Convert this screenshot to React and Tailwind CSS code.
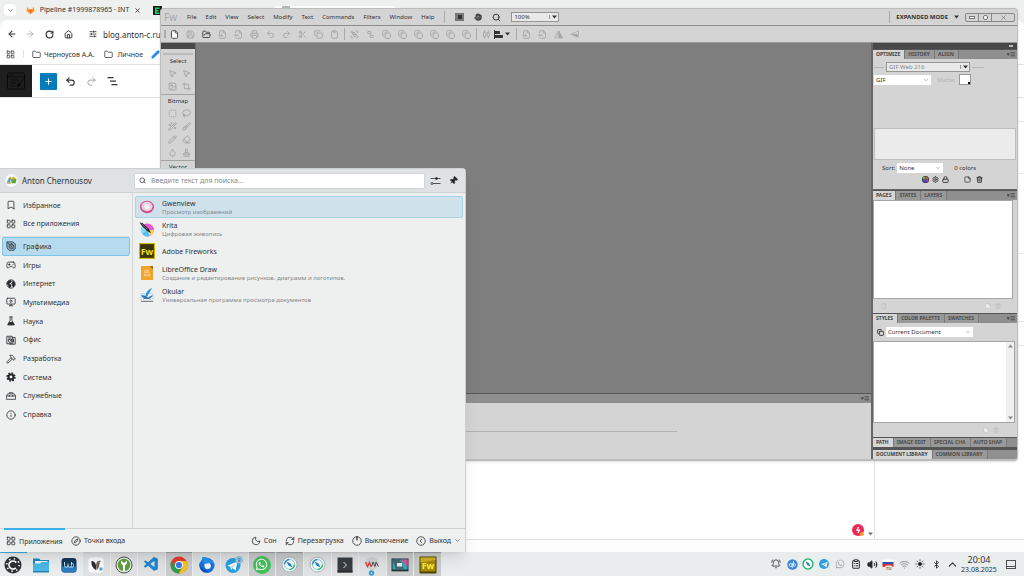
import React, { useState } from 'react';
import {
    AlignHorizontalDistributeCenter, ArrowLeft, ArrowRight, BellRing, Bluetooth, Bookmark, Brush,
    ChevronDown, ChevronUp, Clipboard, ClipboardList, Compass, Copy, Crop, Droplet, Eraser, File,
    FileInput, FileOutput, Folder, FolderOpen, Gamepad2, Group, Hammer, House, Info, Lasso,
    LayoutGrid, Lock, MonitorPlay, Moon, MousePointer2, Pencil, Pin, Printer, Redo2, RefreshCw, RotateCw,
    Save, Scissors, Search, Settings, SlidersHorizontal, SquareDashed, Stamp, Sun, Trash2, Triangle, Undo2, Ungroup,
    Volume2, WandSparkles, Wifi, X, Image as ImageIcon, Hand, Plus, StickyNote,
} from 'lucide-react';
import { FaWhatsapp, FaTelegramPlane } from 'react-icons/fa';
import { VscVscode } from 'react-icons/vsc';

const categories = [
    { label: 'Графика', icon: GraphicsIcon },
    { label: 'Игры', icon: Gamepad2 },
    { label: 'Интернет', icon: GlobeIcon },
    { label: 'Мультимедиа', icon: MonitorPlay },
    { label: 'Наука', icon: FlaskIcon },
    { label: 'Офис', icon: OfficeIcon },
    { label: 'Разработка', icon: Hammer },
    { label: 'Система', icon: GearIcon },
    { label: 'Служебные', icon: ToolboxIcon },
    { label: 'Справка', icon: Info },
];

const apps = [
    { name: 'Gwenview', note: 'Просмотр изображений', icon: GwenviewIcon },
    { name: 'Krita', note: 'Цифровая живопись', icon: KritaIcon },
    { name: 'Adobe Fireworks', icon: FireworksIcon },
    { name: 'LibreOffice Draw', note: 'Создание и редактирование рисунков, диаграмм и логотипов.', icon: DrawIcon },
    { name: 'Okular', note: 'Универсальная программа просмотра документов', icon: OkularIcon },
];

/* ---------- drawings ---------- */

function GraphicsIcon({ size = 10 }) {
    return (
        <svg width={size} height={size} viewBox="0 0 24 24" fill="#8ba1ae" stroke="#31505f" strokeWidth="2">
            <path d="M2 2h9a11 11 0 1 1-9 10z" />
            <circle cx="13" cy="13" r="5" fill="none" />
            <path d="M3 3l16 17M12 5l8 9" />
        </svg>
    );
}

function GlobeIcon({ size = 10 }) {
    return (
        <svg width={size} height={size} viewBox="0 0 24 24" fill="none" stroke="#232629" strokeWidth="1.8">
            <circle cx="12" cy="12" r="10" />
            <path fill="#232629" d="M3 8l6-5 4 2-2 4-4 1 1 3 4 1v4l-4 3-2-6-3-3zM15 4l5 4 1 6-4 5-2-5-1-4 3-3z" />
        </svg>
    );
}

function FlaskIcon({ size = 10 }) {
    return (
        <svg width={size} height={size} viewBox="0 0 24 24" fill="none" stroke="#232629" strokeWidth="1.8">
            <path d="M8 2h8M10 2v8L4 21h16l-6-11V2" />
            <path d="M8 15h8l3 6H5z" fill="#232629" />
        </svg>
    );
}

function OfficeIcon({ size = 10 }) {
    return (
        <svg width={size} height={size} viewBox="0 0 24 24" fill="none" stroke="#232629" strokeWidth="2">
            <path d="M2 3h13v18H2zM15 6h7v16H8" />
            <path d="M5 7h7M5 11h3" />
            <circle cx="10" cy="14" r="4" />
            <path d="M10 14l5-5M18 9v9" />
        </svg>
    );
}

function GearIcon({ size = 10 }) {
    return (
        <svg width={size} height={size} viewBox="0 0 24 24" fill="none" stroke="#232629">
            <circle cx="12" cy="12" r="6" strokeWidth="5" />
            <circle cx="12" cy="12" r="9.5" strokeWidth="3.5" strokeDasharray="4 3.46" />
        </svg>
    );
}

function ToolboxIcon({ size = 10 }) {
    return (
        <svg width={size} height={size} viewBox="0 0 24 24" fill="none" stroke="#232629" strokeWidth="1.8">
            <path d="M1 12l3-5h16l3 5v8H1zM8 7V4h8v3M1 12h22M8 10v4M16 10v4" />
        </svg>
    );
}

function GwenviewIcon() {
    return (
        <svg width="16" height="16" viewBox="0 0 32 32">
            <ellipse cx="16" cy="16" rx="14" ry="12.5" fill="#cf4d8c" />
            <ellipse cx="16" cy="15" rx="11" ry="9.5" fill="#f4dbe8" />
            <path d="M5 11l22 11M27 10L6 23" stroke="#e9a7c8" strokeWidth="1.2" />
            <ellipse cx="16" cy="15.500" rx="7" ry="6" fill="#faf6f9" stroke="#e3a3c4" />
        </svg>
    );
}

function KritaIcon() {
    return (
        <svg width="16" height="16" viewBox="0 0 32 32">
            <circle cx="17" cy="18" r="13" fill="#ee58d6" />
            <path d="M17 18h13a13 13 0 0 1-9 12z" fill="#fbd34c" />
            <path d="M17 18l4 12A13 13 0 0 1 6 25z" fill="#4cc6f7" />
            <path d="M17 18L6 25a13 13 0 0 1 0-14z" fill="#7ee0f6" />
            <path d="M1 3l6 1 13 12 4 8-8-4L5 9z" fill="#25282c" />
            <path d="M3 4l14 13" stroke="#b8bcc0" />
        </svg>
    );
}

function FireworksIcon({ size = 16 }) {
    return (
        <svg width={size} height={size} viewBox="0 0 32 32">
            <rect x="1" y="1" width="30" height="30" fill="#3a3400" stroke="#c9b700" strokeWidth="2.500" />
            <text x="16" y="23" textAnchor="middle" fill="#f4df1b" fontSize="18" fontWeight="700" fontFamily="'Noto Sans', sans-serif">Fw</text>
        </svg>
    );
}

function DrawIcon() {
    return (
        <svg width="16" height="16" viewBox="0 0 32 32">
            <path d="M4 2h16l8 8v20H4z" fill="#f2a32c" />
            <path d="M20 2h8v8z" fill="#a56c05" />
            <path d="M11 11h4v4h-4zM18 9l3 6h-5zM11 18h4v4h-4zM18 18h4v4h-4z" fill="none" stroke="#ffe2a8" strokeWidth="1.200" />
        </svg>
    );
}

function OkularIcon() {
    return (
        <svg width="16" height="16" viewBox="0 0 32 32">
            <path d="M4 13h24v15H4z" fill="#e9edf0" stroke="#b9bfc4" />
            <path d="M4 28h24v2H4z" fill="#7b8288" />
            <path d="M26 2c-9 4-13 10-13 18l4-2c2-5 5-9 9-16z" fill="#1c8fdd" />
            <path d="M4 17c5-2 11 1 14 5 3-4 7-5 10-5-3 4-8 7-12 7S7 21 4 17z" fill="#1d78bd" />
            <path d="M8 24l8-3 8 4" stroke="#1d4e77" fill="none" />
        </svg>
    );
}

function KdeStartIcon() {
    return (
        <svg width="18" height="18" viewBox="0 0 36 36">
            <circle cx="18" cy="18" r="17" fill="#2c2f33" />
            <circle cx="18" cy="18" r="8" fill="none" stroke="#fff" strokeWidth="3.500" strokeDasharray="38 12.300" transform="rotate(45 18 18)" />
            <circle cx="18" cy="18" r="12.500" fill="none" stroke="#fff" strokeWidth="3" strokeDasharray="3 6.820" />
        </svg>
    );
}

function FilesIcon() {
    return (
        <svg width="18" height="18" viewBox="0 0 36 36">
            <path d="M2 5h12l3 3h17v24H2z" fill="#1f86bd" />
            <path d="M6 10h25v8H6z" fill="#e9f5fb" />
            <path d="M2 15h14l3-3h15v20H2z" fill="#4bb7e8" />
            <path d="M2 30h32v3H2z" fill="#2380b2" />
        </svg>
    );
}

function WorkbenchIcon() {
    return (
        <svg width="16" height="16" viewBox="0 0 32 32">
            <rect x="1" y="2" width="30" height="29" rx="6" fill="#143a5c" />
            <path d="M1 19h30v6a6 6 0 0 1-6 6H7a6 6 0 0 1-6-6z" fill="#2b7cc0" />
            <path d="M7 10v7a3.500 3.500 0 0 0 7 0v-4M14 17a3.500 3.500 0 0 0 7 0v-7M21 13c5-2 6 8 0 8" fill="none" stroke="#cfe6f7" strokeWidth="2" />
        </svg>
    );
}

function BirdIcon() {
    return (
        <svg width="16" height="16" viewBox="0 0 32 32">
            <rect x="1" y="1" width="30" height="30" rx="6" fill="#fbfbfb" />
            <path d="M7 8c5 0 8 3 9 9l1 9c-6-1-11-9-10-18z" fill="#2c2c30" />
            <path d="M17 12c1-4 5-5 9-4l-3 3c0 6-1 11-5 14-2-5-2-9-1-13z" fill="#6e6258" />
            <path d="M23 21h6v6h-6z" fill="#5d9fc4" />
        </svg>
    );
}

function KeepassIcon() {
    return (
        <svg width="18" height="18" viewBox="0 0 36 36">
            <circle cx="18" cy="18" r="16" fill="#e8efe4" stroke="#4d5450" strokeWidth="2" />
            <circle cx="18" cy="18" r="12.500" fill="#5f9f3e" />
            <path d="M12 9l6 5 6-5v6l-4 4v11h-4V19l-4-4z" fill="#fff" />
        </svg>
    );
}

function ChromeIcon() {
    return (
        <svg width="18" height="18" viewBox="0 0 36 36">
            <circle cx="18" cy="18" r="17" fill="#e33b2e" />
            <path d="M3.300 9.500A17 17 0 0 0 17 35l8-13-7-4-8 2z" fill="#2f9e4f" />
            <path d="M33 10H18l8 12-9 13A17 17 0 0 0 33 10z" fill="#fac21b" />
            <circle cx="18" cy="18" r="8" fill="#fff" />
            <circle cx="18" cy="18" r="6.200" fill="#377be8" />
        </svg>
    );
}

function ThunderbirdIcon() {
    return (
        <svg width="18" height="18" viewBox="0 0 36 36">
            <circle cx="18" cy="19" r="15" fill="#1b6edb" />
            <path d="M8 3c6-2 13 0 14 4 7 0 11 6 11 13-2-5-5-6-8-6l-10 2C9 14 8 9 8 3z" fill="#2493ee" />
            <path d="M13 16l10-2 3 5c0 5-3 7-7 7s-7-3-6-10z" fill="#eef6ff" />
            <path d="M3 13c2 9 6 16 19 17-9 7-21 0-19-17z" fill="#134eb2" />
        </svg>
    );
}

function TelegramIcon({ badge }) {
    return (
        <svg width="18" height="18" viewBox="0 0 36 36">
            <circle cx="16" cy="19" r="15" fill="#2a9fe0" />
            <path d="M5 19l20-8-4 18-6-5-3 4-1-6z" fill="#fff" />
            <path d="M11 22l11-8-7 10" fill="#b6ddf3" />
            {badge && <circle cx="28" cy="8" r="7" fill="#a9d6f0" stroke="#4a95c4" />}
            {badge && <text x="28" y="12" textAnchor="middle" fontSize="11" fill="#234e69" fontFamily="'Noto Sans', sans-serif">9</text>}
        </svg>
    );
}

function WhatsappIcon() {
    return (
        <span className="flex size-[18px] items-center justify-center rounded-full bg-[#43c15a] text-white">
            <FaWhatsapp size={13} />
        </span>
    );
}

function RouteIcon({ size = 17 }) {
    return (
        <svg width={size} height={size} viewBox="0 0 34 34">
            <circle cx="17" cy="17" r="15" fill="#f5fafb" stroke="#a9b3b9" strokeWidth="2" />
            <path d="M7 17a10 10 0 0 1 10-10" fill="none" stroke="#2c89d3" strokeWidth="3" />
            <path d="M17 27a10 10 0 0 0 10-10" fill="none" stroke="#2dba72" strokeWidth="3" />
            <path d="M17 7a10 10 0 0 1 10 10M7 17a10 10 0 0 0 10 10" fill="none" stroke="#8ccad0" strokeWidth="2" />
            <path d="M11 11l8 4-4 4zM23 23l-8-4 4-4z" fill="#2380b6" />
        </svg>
    );
}

function TerminalIcon() {
    return (
        <svg width="16" height="16" viewBox="0 0 32 32">
            <rect x="1" y="1" width="30" height="30" fill="#383d42" />
            <path d="M1 27h30v4H1z" fill="#2b2f33" />
            <path d="M13 10l6 6-6 6" fill="none" stroke="#dfe3e6" strokeWidth="2" />
        </svg>
    );
}

function WimIcon() {
    return (
        <svg width="16" height="22" viewBox="0 0 32 44">
            <circle cx="16" cy="19" r="13" fill="#d0d0d1" />
            <path d="M3 16l4 9 4-8 3 8" fill="none" stroke="#d8322f" strokeWidth="2.500" />
            <path d="M15 25l3-9 4 9 2-9 5 9" fill="none" stroke="#4e4c50" strokeWidth="2" />
            <circle cx="15" cy="38" r="3.500" fill="#fff" stroke="#3a9bd6" strokeWidth="4" />
        </svg>
    );
}

function ScreenIcon() {
    return (
        <svg width="18" height="16" viewBox="0 0 36 32">
            <rect x="1" y="3" width="34" height="25" fill="#26323b" />
            <path d="M3 5h30v20H3z" fill="#39a6b4" />
            <path d="M3 5h14l9 20H10z" fill="#42686f" />
            <path d="M20 5h13v15z" fill="#df5095" />
            <path d="M12 12h10v7H12z" fill="#e6eef1" />
            <path d="M1 28h34v2H1z" fill="#8d9498" />
        </svg>
    );
}

function FwTaskIcon() {
    return (
        <svg width="18" height="18" viewBox="0 0 36 36">
            <rect x="1" y="1" width="34" height="34" rx="2" fill="#4b4300" />
            <rect x="3" y="3" width="30" height="28" fill="#a88a08" />
            <path d="M3 3h30v5L3 13z" fill="#cfb224" />
            <text x="18" y="26" textAnchor="middle" fontSize="18" fontWeight="700" fill="#ffee3d" fontFamily="'Noto Sans', sans-serif">Fw</text>
        </svg>
    );
}

function GitlabIcon() {
    return (
        <svg width="9" height="9" viewBox="0 0 24 24" className="shrink-0">
            <path d="M12 22L1 13 4 2l4 7h8l4-7 3 11z" fill="#fc9a26" />
            <path d="M12 22L8 9h8z" fill="#f0672c" />
        </svg>
    );
}

function Avatar() {
    return (
        <svg width="13" height="13" viewBox="0 0 28 28">
            <circle cx="14" cy="14" r="14" fill="#f7f9f8" />
            <path d="M4 17l5-8 3 5-2 6z" fill="#5b9cc6" />
            <circle cx="11" cy="10" r="3" fill="#8c9944" />
            <path d="M13 12l6-4 6 3-2 9h-9z" fill="#5fa636" />
            <circle cx="18" cy="9" r="3" fill="#ddab52" />
            <path d="M4 18h9v3H4z" fill="#c7a26b" />
        </svg>
    );
}

function FlagIcon() {
    return (
        <svg width="12" height="13" viewBox="0 0 24 26">
            <path d="M1 3h22v6H1z" fill="#fff" />
            <path d="M1 8h22v5H1z" fill="#2c54b0" />
            <path d="M1 12h22v6H1z" fill="#d93832" />
            <rect x="6" y="15" width="15" height="10" rx="3" fill="#e4e5e6" />
            <text x="13.500" y="23" textAnchor="middle" fontSize="10" fill="#444" fontFamily="'Noto Sans', sans-serif">ru</text>
        </svg>
    );
}

function ColorWheel() {
    return (
        <svg width="7" height="7" viewBox="0 0 14 14">
            <circle cx="7" cy="7" r="7" fill="#222" />
            <path d="M7 7V1a6 6 0 0 1 6 6z" fill="#e34b3c" />
            <path d="M7 7h6a6 6 0 0 1-6 6z" fill="#9d3bc2" />
            <path d="M7 7v6a6 6 0 0 1-6-6z" fill="#2e4fd8" />
            <path d="M7 7H1a6 6 0 0 1 6-6z" fill="#53bd3d" />
        </svg>
    );
}

function FlipIcon({ size = 9 }) {
    return (
        <svg width={size} height={size} viewBox="0 0 18 18">
            <path d="M8 2v14H1z" fill="none" stroke="currentColor" strokeWidth="1.500" />
            <path d="M10 2v14h7z" fill="currentColor" stroke="currentColor" strokeWidth="1.500" />
        </svg>
    );
}

function FlipVerticalIcon({ size = 9 }) {
    return (
        <svg width={size} height={size} viewBox="0 0 18 18">
            <path d="M1 9l16-7v7z" fill="none" stroke="currentColor" strokeWidth="1.500" />
            <path d="M1 9l16 7V9z" fill="currentColor" />
        </svg>
    );
}

function Caret({ className = 'text-[#333]' }) {
    return (
        <svg width="5" height="4" viewBox="0 0 10 8" className={className}>
            <path d="M0 1h10L5 7z" fill="currentColor" />
        </svg>
    );
}

/* ---------- browser ---------- */

const BrowserWindow = () => (
    <div className="absolute inset-0 flex flex-col bg-[#eef0f0] text-[#303336]">
        <div className="flex h-5 shrink-0 items-center">
            <button aria-label="Поиск вкладок" className="ml-1 flex size-3 items-center justify-center rounded bg-white">
                <ChevronDown size={7} />
            </button>
            <div className="ml-2.5 flex w-[115px] items-center justify-between">
                <GitlabIcon />
                <span className="text-[7px] leading-[12px] whitespace-nowrap">Pipeline #1999878965 · INT</span>
                <button aria-label="Закрыть вкладку"><X size={7} strokeWidth={3} /></button>
            </div>
            <svg width="9" height="9" viewBox="0 0 18 18" className="ml-3">
                <rect width="18" height="18" fill="#102218" />
                <path d="M4 3h9v3H7v2h4v3H7v2h6v3H4z" fill="#31c563" />
            </svg>
            <div className="ml-28 mt-1 h-3 w-[122px] rounded-t bg-white px-2">
                <div className="h-1 w-2 bg-[#b5b8ba]" />
            </div>
        </div>
        <div className="shrink-0 rounded-t-lg border-b border-[#e0e2e3] bg-white">
            <div className="flex h-7 items-center">
                <button aria-label="Назад" className="ml-[7px]"><ArrowLeft size={10} strokeWidth={2.5} /></button>
                <button aria-label="Вперёд" className="ml-2 text-[#a3a6a9]"><ArrowRight size={10} /></button>
                <button aria-label="Обновить" className="ml-2.5"><RotateCw size={9} strokeWidth={3} /></button>
                <button aria-label="Домой" className="ml-2.5"><House size={9} strokeWidth={2.5} /></button>
                <SlidersHorizontal size={8} strokeWidth={2.5} className="ml-4" />
                <input aria-label="Адрес" defaultValue="blog.anton-c.ru/wp-admin" className="ml-1.5 w-20 bg-transparent text-[8px] outline-none" />
            </div>
            <div className="flex h-4 items-center pb-1 text-[7px]">
                <LayoutGrid size={9} className="ml-1.5" />
                <span className="ml-2 h-2 w-px bg-[#dcdfe0]" />
                <a href="#bookmark" className="ml-2 flex items-center gap-[3px]"><Folder size={9} />Черноусов А.А.</a>
                <a href="#bookmark" className="ml-2.5 flex items-center gap-1"><Folder size={9} />Личное</a>
                <Pencil size={9} fill="#1c86ee" className="ml-2 text-[#1c86ee]" />
            </div>
        </div>
        <div className="flex h-8 shrink-0 items-center bg-white">
            <span className="flex h-8 w-8 items-center justify-center bg-[#1e1e1e] text-[#0a0a0a]">
                <svg width="20" height="20" viewBox="0 0 40 40" fill="none" stroke="currentColor" strokeWidth="2">
                    <rect x="3" y="4" width="34" height="32" rx="2" />
                    <path d="M3 12h34M8 18h17M8 24h12M8 30h10M6 8h3M12 8h3M35 15L24 30" />
                    <path d="M22 32l3-7 4 3z" fill="currentColor" />
                </svg>
            </span>
            <button aria-label="Добавить блок" className="ml-2 flex size-[17px] items-center justify-center rounded-[1px] bg-[#007cba] text-white"><Plus size={9} strokeWidth={3} /></button>
            <button aria-label="Отменить" className="ml-2"><Undo2 size={11} strokeWidth={2.5} /></button>
            <button aria-label="Повторить" className="ml-2.5 text-[#9a9c9e]"><Redo2 size={11} /></button>
            <button aria-label="Обзор" className="ml-2.5">
                <svg width="11" height="10" viewBox="0 0 22 20" stroke="currentColor" strokeWidth="2.500"><path d="M1 3h12M6 10h12M9 17h12" /></svg>
            </button>
        </div>
        <div className="flex flex-1 border-t border-[#e2e3e4] bg-white">
            <div className="flex flex-1 items-end justify-end gap-1">
                <span className="mb-[3px] flex size-3 items-center justify-center rounded-full bg-[#ee2857] text-white">
                    <svg width="12" height="12" viewBox="0 0 24 24"><path d="M13 6l-3 6h5l-3 6" fill="none" stroke="#fff" strokeWidth="2.500" /><circle cx="20" cy="20" r="4" fill="#f4a02b" /></svg>
                </span>
                <span className="mr-px mb-[3px]"><Caret className="text-[#777]" /></span>
            </div>
            <div className="flex w-[150px] flex-col border-l border-[#dfe1e2]">
                <div className="h-6 border-b border-[#e6e6e6]" />
                <div className="h-13 border-b border-[#e6e6e6]" />
                <div className="h-20 border-b border-[#e6e6e6]" />
                <div className="h-17 border-b border-[#e6e6e6]" />
                <div className="h-6 border-b border-[#e6e6e6]" />
            </div>
        </div>
        <div className="h-[13px] shrink-0 border-t border-[#dfe1e2] bg-[#fdfdfd]" />
    </div>
);

/* ---------- Fireworks ---------- */

const menuItems = ['File', 'Edit', 'View', 'Select', 'Modify', 'Text', 'Commands', 'Filters', 'Window', 'Help'];
const fileTools = [
    ['New', File], ['Save', Save], ['Open', FolderOpen], ['Import', FileInput], ['Export', FileOutput], ['Print', Printer],
    ['Undo', Undo2], ['Redo', Redo2], ['Cut', Scissors], ['Copy', Copy], ['Paste', Clipboard],
];
const arrangeTools = [
    ['Group', Group], ['Ungroup', Ungroup], ['Join', Copy], ['Split', Copy], ['Front', Copy], ['Forward', Copy],
    ['Backward', Copy], ['Back', Copy],
];

const ToolButton = ({ label, icon: Icon, active }) => (
    <button aria-label={label} className={`flex w-4 justify-center ${active ? 'text-[#444]' : 'text-[#a6a6a6]'}`}>
        <Icon size={9} strokeWidth={2.5} fill={label === 'New' ? '#fff' : 'none'} />
    </button>
);

const Separator = () => <span className="h-3 w-px shrink-0 bg-[#a9a9a9]" />;

const Dropdown = ({ id, label, value, className, boxed }) => (
    <span className={`relative flex items-center ${className}`}>
        <select
            id={id}
            aria-label={label}
            defaultValue={value}
            className={`h-full w-full appearance-none pl-0.5 text-[6px] leading-[8px] outline-none ${boxed ? 'border border-[#969696] bg-[#e9e9e9]' : 'bg-white'}`}
        >
            <option>{value}</option>
        </select>
        <span className={`pointer-events-none absolute right-0.5 ${boxed ? 'border-l border-[#999] pl-0.5' : ''}`}>
            {boxed ? <Caret /> : <ChevronDown size={6} className="text-[#777]" />}
        </span>
    </span>
);

const PanelMenu = () => (
    <button aria-label="Panel menu" className="ml-auto mr-0.5 text-[#4a4a4a]">
        <svg width="8" height="5" viewBox="0 0 16 10"><path d="M0 3h5L2.500 7zM7 1h9M7 4h9M7 7h9M7 10h9" fill="currentColor" stroke="currentColor" strokeWidth="1.300" /></svg>
    </button>
);

const Tabs = ({ items, menu }) => {
    const [current, setCurrent] = useState(items[0]);
    return (
        <div role="tablist" className="flex h-[10px] shrink-0 items-stretch border-t border-[#555] bg-[#8f8f8f]">
            {items.map((item) => (
                <button
                    key={item}
                    role="tab"
                    aria-selected={item === current}
                    onClick={() => setCurrent(item)}
                    className={`shrink-0 border-r border-[#7a7a7a] pr-1 pl-[3px] text-left text-[5px] leading-[9px] font-bold whitespace-nowrap ${item === current ? 'bg-[#d6d6d6] text-[#444]' : 'bg-[#999] text-[#4c4c4c]'}`}
                >
                    {item}
                </button>
            ))}
            {menu && <PanelMenu />}
        </div>
    );
};

const ToolGroup = ({ title, tools }) => (
    <div className="border-b border-[#a3a3a3] pb-px text-center">
        <div className="text-[6px] leading-[12px]">{title}</div>
        <div className="grid grid-cols-2 pr-0.5 pl-1">
            {tools.map(([label, Icon]) => (
                <button key={label} aria-label={label} className="flex h-[13px] items-center justify-center text-[#999]">
                    <Icon size={9} />
                </button>
            ))}
        </div>
    </div>
);

const FireworksWindow = () => (
    <div className="absolute top-2 right-1.5 bottom-[91px] left-40 flex flex-col overflow-hidden rounded-sm border border-b-2 border-[#bcbcbc] bg-[#d4d4d4] text-[#333] shadow">
        <div className="flex h-[17px] shrink-0 items-center border-b border-[#8d8d8d] pr-0.5">
            <span className="ml-[3px] w-[23px] text-[10px] text-[#a9a9a9]">Fw</span>
            <nav className="flex gap-[9px] text-[6px]">
                {menuItems.map((item) => <button key={item}>{item}</button>)}
            </nav>
            <span className="ml-2.5 flex items-center gap-2.5">
                <Separator />
                <button aria-label="Bridge"><span className="flex h-2 w-[9px] items-center justify-center bg-[#777]"><span className="h-1 w-1 bg-[#333]" /></span></button>
                <button aria-label="Hand"><Hand size={8} fill="#555" /></button>
                <button aria-label="Zoom"><Search size={9} strokeWidth={2.5} /></button>
                <Dropdown label="Zoom level" value="100%" className="h-[10px] w-12" boxed />
            </span>
            <span className="ml-auto flex items-center gap-1.5">
                <Separator />
                <button className="flex items-center gap-1.5 text-[6px] font-bold">EXPANDED MODE <Caret /></button>
                <span className="flex h-[9px] divide-x divide-[#888] rounded-xs border border-[#888]">
                    <button aria-label="Minimize" className="flex w-[13px] items-center justify-center"><span className="h-[3px] w-[6px] border border-[#777] bg-white" /></button>
                    <button aria-label="Restore" className="flex w-[13px] items-center justify-center"><span className="size-[5px] rounded-xs border border-[#777] bg-white" /></button>
                    <button aria-label="Close" className="flex w-[22px] items-center justify-center"><X size={7} strokeWidth={3} className="text-[#888]" /></button>
                </span>
            </span>
        </div>
        <div className="flex h-[17px] shrink-0 items-center border-b border-[#999] pl-[3px]">
            <span className="h-2 w-0.5 border-x border-[#aaa]" />
            {fileTools.map(([label, Icon]) => <ToolButton key={label} label={label} icon={Icon} active={label === 'New' || label === 'Open'} />)}
            <span className="flex w-1 justify-center"><Separator /></span>
            {arrangeTools.map(([label, Icon]) => <ToolButton key={label} label={label} icon={Icon} />)}
            <span className="flex w-1 justify-center"><Separator /></span>
            <ToolButton label="Distribute" icon={AlignHorizontalDistributeCenter} />
            <button aria-label="Align" className="flex w-5 items-center gap-0.5 text-[#333]">
                <svg width="9" height="9" viewBox="0 0 18 18"><path d="M1 0v18M2 3h9v4H2zM2 11h15v4H2z" fill="currentColor" stroke="currentColor" strokeWidth="2" /></svg>
                <Caret />
            </button>
            <span className="flex w-1 justify-center"><Separator /></span>
            <ToolButton label="Rotate left" icon={FileInput} />
            <ToolButton label="Rotate right" icon={FileOutput} />
            <ToolButton label="Flip horizontal" icon={FlipIcon} />
            <ToolButton label="Flip vertical" icon={FlipVerticalIcon} />
        </div>
        <div className="flex min-h-0 flex-1">
            <div className="flex min-w-0 flex-1 flex-col">
                <div className="flex min-h-0 flex-1 bg-[#7e7e7e]">
                    <div className="w-[35px] shrink-0 overflow-hidden border-r border-[#666] bg-[#d4d4d4]">
                        <div className="h-1.5 bg-[#484848]" />
                        <div className="mx-0.5 mt-1 h-0.5 border-y border-[#bbb]" />
                        <ToolGroup title="Select" tools={[['Pointer', MousePointer2], ['Subselection', MousePointer2], ['Scale', ImageIcon], ['Crop', Crop]]} />
                        <ToolGroup
                            title="Bitmap"
                            tools={[['Marquee', SquareDashed], ['Lasso', Lasso], ['Wand', WandSparkles], ['Brush', Brush], ['Pencil', Pencil], ['Eraser', Eraser], ['Blur', Droplet], ['Stamp', Stamp]]}
                        />
                        <ToolGroup title="Vector" tools={[]} />
                    </div>
                </div>
                <div className="flex h-[10px] shrink-0 items-center border-t border-[#555] bg-[#8f8f8f]"><PanelMenu /></div>
                <div className="flex h-[56px] shrink-0 items-center">
                    <span className="ml-2 h-px w-[508px] bg-[#b1b1b1]" />
                </div>
            </div>
            <aside className="flex w-[146px] shrink-0 flex-col border-l-2 border-[#666]">
                <div className="flex h-1.5 shrink-0 items-center justify-end bg-[#484848] px-1"><span className="h-0.5 w-1 bg-[#bbb]" /></div>
                <Tabs items={['OPTIMIZE', 'HISTORY', 'ALIGN']} menu />
                <div className="flex h-[131px] shrink-0 flex-col border-b border-[#666] px-px">
                    <div className="mt-[3px] flex items-center gap-0.5">
                        <span className="h-px w-2.5 bg-[#b5b5b5]" />
                        <Dropdown label="Preset" value="GIF Web 216" className="h-[10px] w-[84px] text-[#888]" boxed />
                        <span className="h-px w-3 bg-[#b5b5b5]" />
                    </div>
                    <div className="mt-0.5 flex items-center">
                        <Dropdown label="Format" value="GIF" className="h-[10px] w-[57px]" />
                        <span className="ml-1.5 text-[6px] text-[#b3b3b3]">Matte:</span>
                        <button aria-label="Matte colour" className="ml-1 flex h-[11px] w-3 items-end justify-end border border-[#999] bg-white"><span className="h-0.5 w-0.5 bg-black" /></button>
                    </div>
                    <div className="mt-[43px] h-8 shrink-0 border border-[#bdbdbd] bg-[#ebebeb]" />
                    <div className="mt-[3px] flex items-center pl-2 text-[6px]">
                        <label htmlFor="sort">Sort:</label>
                        <Dropdown id="sort" label="Sort" value="None" className="ml-0.5 h-[10px] w-[46px]" />
                        <span className="ml-[11px]">0 colors</span>
                    </div>
                    <div className="mt-[3px] flex items-center gap-[3px] pl-12">
                        <ColorWheel /><Settings size={7} strokeWidth={3} /><Lock size={7} strokeWidth={3} />
                        <StickyNote size={7} strokeWidth={2.5} className="ml-3" /><Trash2 size={7} strokeWidth={3} className="ml-0.5" />
                    </div>
                </div>
                <Tabs items={['PAGES', 'STATES', 'LAYERS']} menu />
                <div className="flex h-[113px] shrink-0 flex-col pr-1">
                    <div className="h-[99px] border border-[#a5a5a5] bg-white" />
                    <div className="flex flex-1 items-center gap-1 px-2 text-[#bbb]">
                        <File size={6} /><StickyNote size={6} fill="#eee" className="ml-auto" /><Trash2 size={6} className="mr-1" />
                    </div>
                </div>
                <Tabs items={['STYLES', 'COLOR PALETTE', 'SWATCHES']} menu />
                <div className="flex min-h-0 flex-1 flex-col pr-0.5">
                    <div className="flex h-[18px] shrink-0 items-center gap-0.5 pl-1">
                        <Copy size={7} strokeWidth={3} />
                        <Dropdown label="Styles" value="Current Document" className="h-[10px] w-[87px]" />
                    </div>
                    <div className="flex h-[82px] shrink-0 justify-end border border-[#a5a5a5] bg-white">
                        <div className="flex w-2 flex-col items-center justify-between bg-[#f0f0f0] py-0.5">
                            <span className="rotate-180"><Caret className="text-[#888]" /></span>
                            <Caret className="text-[#888]" />
                        </div>
                    </div>
                    <div className="flex flex-1 items-center justify-end gap-1 pr-4 text-[#bbb]"><StickyNote size={6} fill="#eee" /><Trash2 size={6} /></div>
                </div>
                <Tabs items={['PATH', 'IMAGE EDIT', 'SPECIAL CHA', 'AUTO SHAP']} />
                <div className="h-0.5 shrink-0 bg-[#555]" />
                <Tabs items={['DOCUMENT LIBRARY', 'COMMON LIBRARY']} />
            </aside>
        </div>
    </div>
);

/* ---------- application launcher ---------- */

const CategoryRow = ({ label, icon: Icon, selected, onClick }) => (
    <button
        onClick={onClick}
        className={`flex w-full items-center gap-[7px] rounded-xs border px-[3px] text-left text-[7px] ${selected ? 'border-[#7cc4ea] bg-[#b7dbee]' : 'border-transparent'}`}
    >
        <Icon size={10} strokeWidth={2} />
        {label}
    </button>
);

const Launcher = () => {
    const [category, setCategory] = useState('Графика');
    return (
        <div className="absolute bottom-0 left-0 flex h-96 w-[466px] flex-col rounded-tr-sm border-t border-r border-[#cdd0d2] bg-[#eef0f0] text-[#303336] shadow-lg">
            <div className="flex h-6 shrink-0 items-center border-b border-[#d0d3d4] bg-[#dfe2e3]">
                <span className="flex w-[134px] items-center gap-1 pl-[5px] text-[8px]"><Avatar />Anton Chernousov</span>
                <label className="flex h-4 w-[291px] items-center gap-[5px] rounded-xs border border-[#d3d6d8] bg-white px-1">
                    <Search size={7} strokeWidth={2.5} />
                    <input type="search" aria-label="Поиск" placeholder="Введите текст для поиска..." className="flex-1 text-[7px] outline-none placeholder:text-[#7f8c8d]" />
                </label>
                <button aria-label="Настроить" className="ml-[5px]">
                    <svg width="11" height="10" viewBox="0 0 22 20" fill="none" stroke="#232629" strokeWidth="1.500"><path d="M1 5h20M6 15h15" /><circle cx="13" cy="5" r="2" fill="#232629" /><circle cx="4" cy="15" r="2" /></svg>
                </button>
                <button aria-label="Закрепить" className="ml-2"><Pin size={9} fill="#232629" className="rotate-45" /></button>
            </div>
            <div className="flex min-h-0 flex-1">
                <div className="w-[133px] shrink-0 border-r border-[#d3d6d8] px-0.5 pt-[3px]">
                    <div className="grid h-[37px] grid-rows-2">
                        <CategoryRow label="Избранное" icon={Bookmark} />
                        <CategoryRow label="Все приложения" icon={LayoutGrid} />
                    </div>
                    <div className="mt-[3px] border-t border-[#dcdfe0]" />
                    <div className="grid h-[187px] grid-rows-10">
                        {categories.map((item) => (
                            <CategoryRow key={item.label} {...item} selected={item.label === category} onClick={() => setCategory(item.label)} />
                        ))}
                    </div>
                </div>
                <div className="flex flex-1 flex-col px-0.5 pt-[3px]">
                    {apps.map((app, i) => (
                        <button key={app.name} className={`flex h-[22px] items-center gap-[7px] rounded-xs border px-[3px] text-left ${i === 0 ? 'border-[#a5d3ea] bg-[#cfe2ec]' : 'border-transparent'}`}>
                            <app.icon />
                            <span className="flex flex-col">
                                <span className="text-[7px] leading-[9px]">{app.name}</span>
                                {app.note && <span className="text-[6px] leading-[8px] text-[#85898c]">{app.note}</span>}
                            </span>
                        </button>
                    ))}
                </div>
            </div>
            <div className="flex h-6 shrink-0 items-stretch border-t border-[#d0d3d4] pr-1 pl-1 text-[7px]">
                <button className="-mt-px flex w-[61px] items-center gap-[3px] border-t-2 border-[#3daee9] pl-0.5"><LayoutGrid size={10} />Приложения</button>
                <button className="ml-1.5 flex items-center gap-[3px]"><Compass size={10} />Точки входа</button>
                <span className="ml-auto flex gap-2">
                    <button className="flex items-center gap-[3px]"><Moon size={10} />Сон</button>
                    <button className="flex items-center gap-[3px]"><RefreshCw size={10} />Перезагрузка</button>
                    <button className="flex items-center gap-[3px]">
                        <svg width="10" height="10" viewBox="0 0 20 20" fill="none" stroke="currentColor" strokeWidth="1.600"><circle cx="10" cy="10" r="8.500" /><path d="M10 0v9" strokeWidth="2.500" /></svg>
                        Выключение
                    </button>
                    <button className="flex items-center gap-[3px]">
                        <svg width="10" height="10" viewBox="0 0 20 20" fill="none" stroke="currentColor" strokeWidth="1.600"><circle cx="10" cy="10" r="8.500" /><path d="M12 6l-4 4 4 4" /></svg>
                        Выход
                        <ChevronDown size={7} />
                    </button>
                </span>
            </div>
        </div>
    );
};

/* ---------- taskbar ---------- */

const tasks = [
    { name: 'Меню', icon: KdeStartIcon, state: 'menu' },
    { name: 'Dolphin', icon: FilesIcon },
    { name: 'Workbench', icon: WorkbenchIcon },
    { name: 'DBeaver', icon: BirdIcon, state: 'open' },
    { name: 'KeePassXC', icon: KeepassIcon, state: 'open' },
    { name: 'VS Code', icon: () => <VscVscode size={17} className="text-[#1f86d1]" />, state: 'open' },
    { name: 'Chrome', icon: ChromeIcon, state: 'active' },
    { name: 'Thunderbird', icon: ThunderbirdIcon, state: 'open' },
    { name: 'Telegram', icon: () => <TelegramIcon badge />, state: 'open' },
    { name: 'WhatsApp', icon: WhatsappIcon, state: 'active' },
    { name: 'Remote 1', icon: RouteIcon, state: 'active' },
    { name: 'Remote 2', icon: RouteIcon, state: 'open' },
    { name: 'Konsole', icon: TerminalIcon, state: 'open' },
    { name: 'WIM', icon: WimIcon, state: 'open' },
    { name: 'Экран', icon: ScreenIcon, state: 'active' },
    { name: 'Fireworks', icon: FwTaskIcon, state: 'active' },
];

const taskStyle = {
    menu: 'border-[#3daee9]',
    open: 'border-[#d5d7d8] bg-[#dfe1e2]',
    active: 'border-[#a4a7a9] bg-[#c8cacc]',
};

const tray = [
    ['Уведомления', <BellRing size={10} />],
    ['qBittorrent', <svg width="11" height="11" viewBox="0 0 22 22"><circle cx="11" cy="11" r="10.500" fill="#3e86cf" /><circle cx="7.500" cy="12" r="3" fill="none" stroke="#fff" strokeWidth="1.500" /><path d="M10.500 8v10M13 4v11" stroke="#fff" strokeWidth="1.500" /><circle cx="15" cy="12" r="2.500" fill="none" stroke="#d5eaff" strokeWidth="1.500" /></svg>],
    ['Remote', <svg width="12" height="12" viewBox="0 0 24 24"><circle cx="12" cy="12" r="10" fill="#fff" stroke="#27b777" strokeWidth="3" /><path d="M7 7l7 3-4 4zM17 17l-7-3 4-4z" fill="#2187b5" /></svg>],
    ['Telegram', <span className="flex size-[10px] items-center justify-center rounded-full bg-[#2a9fe0] text-white"><FaTelegramPlane size={7} /></span>],
    ['WhatsApp', <FaWhatsapp size={10} className="text-[#a3a6a8]" />],
    ['Буфер обмена', <ClipboardList size={10} strokeWidth={2.5} />],
    ['Громкость', <Volume2 size={11} fill="#232629" />],
    ['Раскладка', <FlagIcon />],
    ['Сеть', <Wifi size={11} className="text-[#84888b]" />],
    ['Яркость', <Sun size={10} strokeWidth={2} fill="#232629" />],
    ['Bluetooth', <Bluetooth size={9} strokeWidth={2.5} />],
    ['Показать скрытые', <ChevronUp size={13} />],
];

const Taskbar = () => (
    <div className="flex h-6 shrink-0 items-stretch bg-[#eaedee] text-[#303336]">
        <div className="flex w-[441px] gap-px">
            {tasks.map(({ name, icon: Icon, state }) => (
                <button key={name} aria-label={name} className={`flex min-w-0 flex-1 items-center justify-center border-t ${state ? taskStyle[state] : 'border-transparent'}`}>
                    <Icon />
                </button>
            ))}
        </div>
        <div className="ml-auto flex items-center">
            {tray.map(([name, icon]) => <button key={name} aria-label={name} className="flex w-4 justify-center">{icon}</button>)}
            <div className="w-[38px] text-center">
                <div className="text-[9px] leading-[10px]">20:04</div>
                <div className="text-[7px] leading-[9px]">23.08.2025</div>
            </div>
            <button aria-label="Показать рабочий стол" className="mx-2 flex h-[9px] w-[10px] flex-col justify-end border border-[#4d5053]"><span className="mb-px h-px bg-[#4d5053]" /></button>
        </div>
    </div>
);

export default function App() {
    return (
        <div className="flex h-screen flex-col overflow-hidden font-['Noto_Sans',sans-serif] leading-none">
            <div className="relative min-h-0 flex-1">
                <BrowserWindow />
                <FireworksWindow />
                <Launcher />
            </div>
            <Taskbar />
        </div>
    );
}
